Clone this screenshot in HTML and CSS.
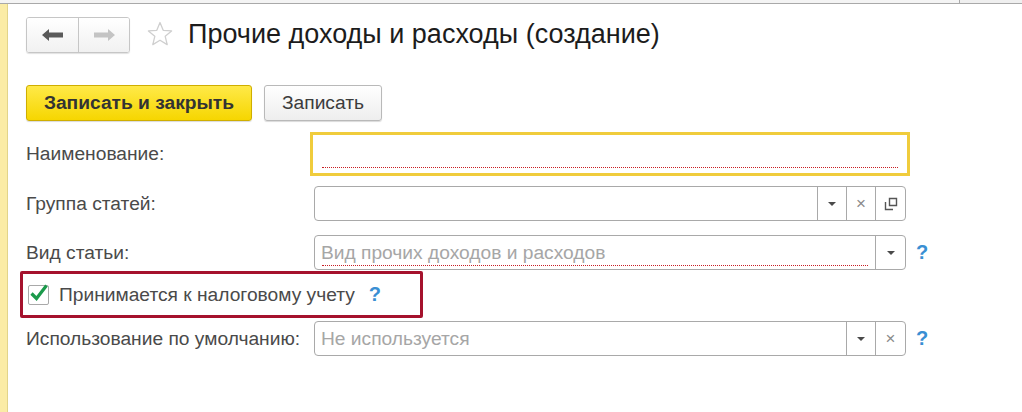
FILE: index.html
```html
<!DOCTYPE html>
<html lang="ru">
<head>
  <meta charset="UTF-8">
  <title>Прочие доходы и расходы (создание)</title>
  <link rel="stylesheet" href="styles.css">
</head>
<body>

  <div class="topbar">
    <div class="topbar-main"></div>
    <div class="topbar-side"></div>
  </div>

  <div class="page">
    <div class="strip"></div>

    <div class="form">
      <div class="header">
        <div class="nav">
          <button class="nav-btn">
            <svg width="22" height="12" viewBox="0 0 22 12"><path d="M0 6 L7 0 L7 3.5 L21 3.5 L21 8.5 L7 8.5 L7 12 Z" fill="#5a5a5a"/></svg>
          </button>
          <button class="nav-btn">
            <svg width="22" height="12" viewBox="0 0 22 12"><path d="M22 6 L15 0 L15 3.5 L1 3.5 L1 8.5 L15 8.5 L15 12 Z" fill="#c4c4c4"/></svg>
          </button>
        </div>
        <svg class="star" width="26" height="26" viewBox="0 0 26 26"><path d="M13 1.5 L16.2 9.3 L24.6 9.9 L18.2 15.3 L20.2 23.6 L13 19.2 L5.8 23.6 L7.8 15.3 L1.4 9.9 L9.8 9.3 Z" fill="none" stroke="#cfcfcf" stroke-width="1.3" stroke-linejoin="round"/></svg>
        <h1>Прочие доходы и расходы (создание)</h1>
      </div>

      <div class="toolbar">
        <button class="btn btn-primary">Записать и закрыть</button>
        <button class="btn">Записать</button>
      </div>

      <div class="row row-first">
        <div class="label">Наименование:</div>
        <div class="field field-focus">
          <div class="field-text"><span class="underline"></span></div>
        </div>
      </div>

      <div class="row row-group">
        <div class="label">Группа статей:</div>
        <div class="field">
          <div class="field-text"></div>
          <div class="fbtn"><span class="caret"></span></div>
          <div class="fbtn"><span class="cross">×</span></div>
          <div class="fbtn">
            <svg width="14" height="14" viewBox="0 0 14 14"><path d="M5.5 1.5 H12.5 V8.5 H5.5 Z" fill="none" stroke="#555" stroke-width="1.4"/><path d="M1.5 5 V12.5 H9" fill="none" stroke="#555" stroke-width="1.4"/></svg>
          </div>
        </div>
      </div>

      <div class="row row-kind">
        <div class="label">Вид статьи:</div>
        <div class="field">
          <div class="field-text">
            <span class="placeholder">Вид прочих доходов и расходов</span>
            <span class="underline"></span>
          </div>
          <div class="fbtn"><span class="caret"></span></div>
        </div>
        <span class="help">?</span>
      </div>

      <div class="check-box">
        <span class="checkbox">
          <svg width="20" height="18" viewBox="0 0 20 18"><path d="M2.5 9.5 L7.5 14.5 L17.5 1.5" fill="none" stroke="#1b9a4b" stroke-width="3.2"/></svg>
        </span>
        <span class="check-label">Принимается к налоговому учету</span>
        <span class="help">?</span>
      </div>

      <div class="row row-usage">
        <div class="label">Использование по умолчанию:</div>
        <div class="field">
          <div class="field-text">
            <span class="placeholder">Не используется</span>
          </div>
          <div class="fbtn"><span class="caret"></span></div>
          <div class="fbtn"><span class="cross">×</span></div>
        </div>
        <span class="help">?</span>
      </div>
    </div>
  </div>

</body>
</html>
```

FILE: styles.css
```css
body {
  margin: 0;
  padding: 0;
  font-family: 'Liberation Sans', Arial, sans-serif;
  background: #fff;
  color: #4a4a4a;
  height: 412px;
  overflow: hidden;
}

.topbar {
  display: flex;
  height: 3px;
  border-bottom: 1px solid #a9a9a9;
}

.topbar-main {
  flex: 1;
  background: #f4f4f4;
}

.topbar-side {
  width: 62px;
  background: #efefef;
  border-left: 1px solid #a9a9a9;
}

.page {
  display: flex;
  height: 408px;
}

.strip {
  width: 7px;
  background: #fbeca6;
  border-right: 1px solid #e2d48a;
}

.form {
  flex: 1;
  padding-left: 18px;
}

/* Header */
.header {
  display: flex;
  align-items: center;
  margin-top: 14px;
  height: 34px;
}

.nav {
  display: flex;
  height: 34px;
  border: 1px solid #c6c6c6;
  border-radius: 3px;
  box-shadow: 0 1px 1px rgba(0, 0, 0, 0.12);
  overflow: hidden;
}

.nav-btn {
  width: 51px;
  height: 34px;
  padding: 0;
  border: none;
  background: linear-gradient(#ffffff, #f1f1f1);
  display: flex;
  align-items: center;
  justify-content: center;
}

.nav-btn + .nav-btn {
  border-left: 1px solid #c6c6c6;
}

.star {
  margin-left: 17px;
  margin-top: -2px;
}

h1 {
  margin: 0 0 0 15px;
  font-size: 27px;
  font-weight: normal;
  color: #1c1c1c;
  position: relative;
  top: -1px;
}

/* Toolbar */
.toolbar {
  display: flex;
  gap: 12px;
  margin-top: 33px;
}

.btn {
  height: 36px;
  padding: 0;
  font-family: 'Liberation Sans', Arial, sans-serif;
  font-size: 19.2px;
  color: #3c3c3c;
  border: 1px solid #b9b9b9;
  border-radius: 3px;
  background: linear-gradient(#ffffff, #eeeeee);
  box-shadow: 0 1px 1px rgba(0, 0, 0, 0.15);
}

.btn-primary {
  width: 226px;
  font-weight: bold;
  color: #333;
  border-color: #cfae00;
  background: linear-gradient(#ffe948, #f6d600);
}

.toolbar .btn:last-child {
  width: 118px;
}

/* Form rows */
.row {
  display: flex;
  align-items: center;
}

.label {
  width: 288px;
  font-size: 19.2px;
  color: #4a4a4a;
}

.row-first {
  margin-top: 11px;
}

.row-first .label {
  width: 284px;
}

.row-group {
  margin-top: 10px;
}

.row-kind {
  margin-top: 14px;
}

.row-usage {
  margin-top: 3px;
}

.field {
  display: flex;
  width: 592px;
  height: 35px;
  box-sizing: border-box;
  border: 1px solid #a9a9a9;
  border-radius: 4px;
  background: #fff;
}

.field-focus {
  width: 600px;
  height: 44px;
  border: 3px solid #f0cc3c;
  border-radius: 0;
}

.field-text {
  flex: 1;
  position: relative;
  padding-left: 6px;
  display: flex;
  align-items: center;
  font-size: 19.2px;
}

.placeholder {
  color: #a6a6a6;
}

.underline {
  position: absolute;
  left: 7px;
  right: 7px;
  bottom: 3px;
  border-bottom: 1px dotted #c81e24;
}

.field-focus .underline {
  left: 9px;
  right: 9px;
  bottom: 5px;
}

.fbtn {
  width: 28px;
  border-left: 1px solid #a9a9a9;
  display: flex;
  align-items: center;
  justify-content: center;
}

.fbtn:last-child {
  width: 29px;
}

.caret {
  width: 0;
  height: 0;
  border-left: 4px solid transparent;
  border-right: 4px solid transparent;
  border-top: 4px solid #4a4a4a;
  margin-top: 1px;
}

.cross {
  font-size: 17px;
  color: #8a8a8a;
  line-height: 1;
}

.help {
  margin-left: 10px;
  font-size: 20px;
  font-weight: bold;
  color: #3a8fd3;
}

/* Checkbox annotation */
.check-box {
  display: flex;
  align-items: center;
  width: 397px;
  height: 41px;
  margin-top: 1px;
  margin-left: -6px;
  border: 3px solid #a5122d;
  border-radius: 2px;
}

.checkbox {
  width: 19px;
  height: 18px;
  margin-left: 5px;
  border: 1px solid #a9a9a9;
  border-radius: 2px;
  position: relative;
}

.checkbox svg {
  position: absolute;
  left: 0;
  top: -2px;
}

.check-label {
  margin-left: 10px;
  font-size: 19.2px;
  color: #4a4a4a;
}

.check-box .help {
  margin-left: 14px;
}
```
